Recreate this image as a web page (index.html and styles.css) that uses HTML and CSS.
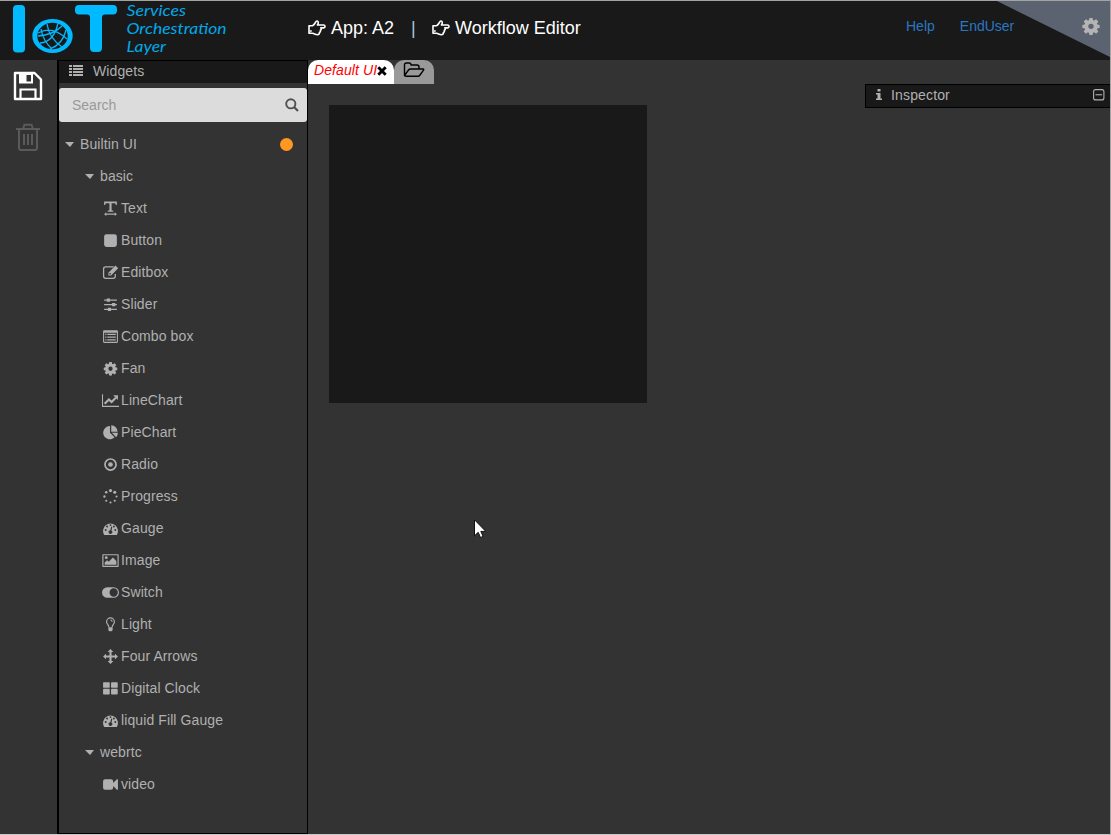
FILE: index.html
```html
<!DOCTYPE html>
<html lang="en">
<head>
<meta charset="utf-8">
<title>IoT Services Orchestration Layer</title>
<link rel="stylesheet" href="styles.css">
</head>
<body>
<svg class="defs" aria-hidden="true">
  <symbol id="gear" viewBox="0 0 16 16"><path fill-rule="evenodd" d="M6.600 .8h2.800l.4 2 1 .4 1.700-1.200 2 2-1.200 1.700.4 1 2 .4v2.600l-2 .4-.4 1 1.200 1.700-2 2-1.700-1.200-1 .4-.4 2H6.600l-.4-2-1-.4-1.700 1.200-2-2 1.200-1.700-.4-1-2-.4V7.100l2-.4.4-1L1.500 4l2-2 1.700 1.200 1-.4zM8 5.900a2.400 2.400 0 1 0 0 4.800 2.400 2.400 0 0 0 0-4.800z"/></symbol>
  <symbol id="hand" viewBox="0 0 18 16"><path fill="none" stroke="currentColor" stroke-width="1.600" stroke-linejoin="round" d="M1 5.700h3.500C6 5 6.600 3.700 7.600 2.200 8.200 .6 10.300 .7 10.300 2.500c0 1-.4 1.700-.9 2.500h6.100c2 0 2 2.900 0 2.900h-2.700c.8.700.5 2-.5 2.400.4.900 0 1.900-.9 2.200.2 1.500-.7 2.200-2 2.200-2 0-3-1-4.900-1.400H1z"/><circle cx="2.900" cy="11" r=".9"/></symbol>
  <symbol id="gauge" viewBox="0 0 16 16"><path fill-rule="evenodd" d="M2 14a7 7 0 1 1 12 0zM3.500 8.500a.9.900 0 1 0 0 1.800.9.900 0 0 0 0-1.800zM4.800 5.200a.9.900 0 1 0 0 1.800.9.900 0 0 0 0-1.800zM8 3.900a.9.900 0 1 0 0 1.800.9.900 0 0 0 0-1.800zM11.200 5.200a.9.900 0 1 0 0 1.800.9.900 0 0 0 0-1.800zM12.500 8.500a.9.900 0 1 0 0 1.800.9.900 0 0 0 0-1.800zM8.700 6.200l-.9 3.400a1.700 1.700 0 1 0 1.100.3l.8-3.400z"/></symbol>
</svg>
<div class="app">
  <header class="header">
    <svg class="logo" viewBox="0 0 240 59">
      <rect x="13" y="4" width="12" height="47.500" rx="4"/>
      <path d="M79 4h34a4 4 0 0 1 4 4v1.500a4 4 0 0 1-4 4h-8q-3 0-3 3V47a4 4 0 0 1-4 4h-4a4 4 0 0 1-4-4V16.500q0-3-3-3h-8a4 4 0 0 1-4-4V8a4 4 0 0 1 4-4z"/>
      <ellipse cx="52.500" cy="35" rx="20.200" ry="17"/>
      <ellipse class="globe" cx="52.500" cy="35" rx="15.200" ry="13.200"/>
      <g class="mesh">
        <path d="M38 32Q52 24 67 38M40 42Q54 41 58 22M47 23Q49 37 62 46M38 35Q53 34 62 25M41 28Q43 40 52 48M50 48Q63 43 66 29"/>
      </g>
      <g class="tagline">
        <text x="126.500" y="15" textLength="59.500" lengthAdjust="spacingAndGlyphs">Services</text>
        <text x="126.500" y="33" textLength="100" lengthAdjust="spacingAndGlyphs">Orchestration</text>
        <text x="126.500" y="51" textLength="39.500" lengthAdjust="spacingAndGlyphs">Layer</text>
      </g>
    </svg>
    <nav class="title">
      <svg class="hand"><use href="#hand"/></svg><span class="app-name">App: A2</span>
      <span class="sep">|</span>
      <svg class="hand"><use href="#hand"/></svg><span class="editor">Workflow Editor</span>
    </nav>
    <nav class="links"><a>Help</a><a>EndUser</a></nav>
    <div class="corner"><svg><use href="#gear"/></svg></div>
  </header>
  <main class="body">
    <aside class="tools">
      <svg class="save" viewBox="0 0 30 30"><path d="M2 2h19.500L28 8.500V28H2z" fill="none" stroke="currentColor" stroke-width="2.400" stroke-linejoin="round"/><path fill-rule="evenodd" d="M6 2h14v10.500H6zM13.500 4v6.500H18V4z"/><path d="M7.500 28v-9.500h15V28" fill="none" stroke="currentColor" stroke-width="2.200"/></svg>
      <svg class="trash" viewBox="0 0 26 28"><path d="M1 6h24M8 6l1.500-4.300h7L18 6M4 6v19q0 2 2 2h14q2 0 2-2V6M9 11v11M13 11v11M17 11v11" fill="none" stroke="currentColor" stroke-width="2"/></svg>
    </aside>
    <aside class="sidebar">
      <div class="panel-head"><svg viewBox="0 0 14 12"><path d="M0 0h3v2H0zM4 0h10v2H4zM0 3h3v2H0zM4 3h10v2H4zM0 6h3v2H0zM4 6h10v2H4zM0 9h3v2H0zM4 9h10v2H4z"/></svg>Widgets</div>
      <div class="search"><span>Search</span><svg viewBox="0 0 14 14"><path d="M9 9l4 4" stroke="currentColor" stroke-width="2.200"/><circle cx="5.800" cy="5.800" r="4.600" fill="none" stroke="currentColor" stroke-width="1.900"/></svg></div>
      <ul class="tree">
        <li class="root"><i class="caret"></i>Builtin UI<b class="dot"></b></li>
        <li class="group"><i class="caret"></i>basic</li>
        <li><svg viewBox="0 0 16 16"><path d="M2 1.500h12v3.300h-1L12.500 3H9v6.600l1.600.5v1H5.400v-1L7 9.600V3H3.500L3 4.800H2zM2 13.300l2-1.700v1.100h8v-1.100l2 1.700-2 1.700v-1.100H4V15z"/></svg>Text</li>
        <li><svg viewBox="0 0 16 16"><rect x="2" y="2" width="12" height="12" rx="2.300"/></svg>Button</li>
        <li><svg viewBox="0 0 16 16"><path d="M11 2.600H3.500Q1.500 2.600 1.500 4.600v7q0 2 2 2h7q2 0 2-2V9.500" fill="none" stroke="currentColor" stroke-width="1.200"/><path fill-rule="evenodd" d="M12.700 1.500l2.500 2.500L8.600 10.800H6V8.200zM7 8.800v1h1l.6-.6-1-1z"/></svg>Editbox</li>
        <li><svg viewBox="0 0 16 16"><path d="M2 3.200h12v1.200H2zM2 7.600h12v1.200H2zM2 12h12v1.200H2zM4.500 2.300h3v3h-3zM9.500 6.700h3v3h-3zM5.500 11.100h3v3h-3z"/></svg>Slider</li>
        <li><svg viewBox="0 0 16 16"><path fill-rule="evenodd" d="M2 2h12q1 0 1 1v10q0 1-1 1H2q-1 0-1-1V3q0-1 1-1zM2 4.500V13h12V4.500zM3 5.500h1.200v1.200H3zM5 5.500h8v1.200H5zM3 8h1.200v1.200H3zM5 8h8v1.200H5zM3 10.500h1.200v1.200H3zM5 10.500h8v1.200H5z"/></svg>Combo box</li>
        <li><svg viewBox="-1.500 -1.500 19 19"><use href="#gear" width="16" height="16"/></svg>Fan</li>
        <li><svg viewBox="0 0 16 16"><path d="M.5 2v11.500H16" fill="none" stroke="currentColor"/><path d="M2.500 11l4-4 2.500 2.500L13 5.500" fill="none" stroke="currentColor" stroke-width="2"/><path d="M10.500 3H15v4.500z"/></svg>LineChart</li>
        <li><svg viewBox="0 0 16 16"><path d="M7.500 2v6.200l4.300 4.300A6.200 6.200 0 1 1 7.500 2zM8.700 1.200A6.200 6.200 0 0 1 14.700 7.300h-6zM9.300 8.300h5.700a6 6 0 0 1-1.700 4.100z"/></svg>PieChart</li>
        <li><svg viewBox="0 0 16 16"><circle cx="8" cy="8" r="5.200" fill="none" stroke="currentColor" stroke-width="1.600"/><circle cx="8" cy="8" r="2.200"/></svg>Radio</li>
        <li><svg viewBox="0 0 16 16"><circle cx="8" cy="2.400" r="1.500"/><circle cx="12" cy="4" r="1.500"/><circle cx="13.700" cy="8" r="1"/><circle cx="12" cy="12" r="1"/><circle cx="8" cy="13.700" r="1"/><circle cx="4" cy="12" r="1"/><circle cx="2.300" cy="8" r="1.100"/><circle cx="4" cy="4" r="1.200"/></svg>Progress</li>
        <li><svg><use href="#gauge"/></svg>Gauge</li>
        <li><svg viewBox="0 0 16 16"><path fill-rule="evenodd" d="M1 2h14q.7 0 .7.700v10.600q0 .7-.7.700H1q-.7 0-.7-.7V2.700Q.3 2 1 2zM1.400 3.100v9.800h13.200V3.100z"/><circle cx="4" cy="5.300" r="1.400"/><path d="M2.500 12V9.800l2.300-2 1.500 1.400 4-4 3.200 3.200V12z"/></svg>Image</li>
        <li><svg viewBox="0 0 16 16"><path fill-rule="evenodd" d="M5 3h6a5 5 0 0 1 0 10H5A5 5 0 0 1 5 3zM11 4.100a3.900 3.900 0 1 0 0 7.800 3.900 3.900 0 0 0 0-7.800z"/></svg>Switch</li>
        <li><svg viewBox="0 0 16 16"><path d="M6.500 10.500C6.500 8.500 4.300 7.800 4.300 5.500a3.700 3.700 0 0 1 7.400 0c0 2.300-2.200 3-2.200 5M8 3.800q1.500 0 1.600 1.500" fill="none" stroke="currentColor" stroke-width="1.100"/><path d="M6 10.500h4v2.800l-1 1H7l-1-1z"/></svg>Light</li>
        <li><svg viewBox="0 0 16 16"><path d="M8 1l2.700 2.800H9v3.200h3.200V5.300L15 8l-2.800 2.700V9H9v3.200h1.700L8 15l-2.700-2.800H7V9H3.800v1.700L1 8l2.800-2.700V7H7V3.800H5.300z"/></svg>Four Arrows</li>
        <li><svg viewBox="0 0 16 16"><rect x="1" y="2" width="6.300" height="5.300" rx=".8"/><rect x="8.500" y="2" width="6.300" height="5.300" rx=".8"/><rect x="1" y="8.300" width="6.300" height="5.300" rx=".8"/><rect x="8.500" y="8.300" width="6.300" height="5.300" rx=".8"/></svg>Digital Clock</li>
        <li><svg><use href="#gauge"/></svg>liquid Fill Gauge</li>
        <li class="group"><i class="caret"></i>webrtc</li>
        <li><svg viewBox="0 0 16 16"><path d="M3 3h5.500q2 0 2 2v1.500L14 3h1v10h-1l-3.500-3.500V11q0 2-2 2H3q-2 0-2-2V5q0-2 2-2z"/></svg>video</li>
      </ul>
    </aside>
    <section class="workspace">
      <div class="tabs">
        <div class="tab active"><em>Default UI</em><svg viewBox="0 0 10 10"><path d="M1.300 1.300l7.400 7.400M8.700 1.300L1.300 8.700" stroke="currentColor" stroke-width="2.900"/></svg></div>
        <div class="tab open"><svg viewBox="0 0 22 16"><path d="M1.500 13V3q0-2 2-2H6q2 0 2 2h6q2 0 2 2v2M1.500 13.500L5.500 8q.8-1 2-1H20q1.200 0 .5 1.200L17 13q-.8 1.200-2 1.200H3q-1.500 0-1.500-1.200z" fill="none" stroke="currentColor" stroke-width="1.400" stroke-linejoin="round"/></svg></div>
      </div>
      <div class="stage"></div>
      <div class="inspector"><svg class="info" viewBox="0 0 6 12"><path d="M1.500 0h3v2.500h-3zM0 4h4.500v5.500H6V11H0V9.500h1.500v-4H0z"/></svg>Inspector<svg class="collapse" viewBox="0 0 12 12"><rect x=".6" y=".6" width="10.300" height="10.300" rx="2" fill="none" stroke="currentColor" stroke-width="1.100"/><path d="M2.500 5.200h6.600v1.100H2.500z"/></svg></div>
      <svg class="cursor" viewBox="0 0 12 20"><path d="M.5.8v16l3.700-3.500 2.300 5.200 2.600-1.100-2.300-5h5z"/></svg>
    </section>
  </main>
</div>
</body>
</html>
```

FILE: styles.css
```css
* { box-sizing: border-box; }
body { margin: 0; background: #333; color: #b0b0b0; font: 14px/20px "Liberation Sans", Arial, sans-serif; overflow: hidden; }
svg { display: block; fill: currentColor; flex: none; }
.defs { width: 0; height: 0; position: absolute; }
.app { width: 1111px; height: 835px; display: flex; flex-direction: column; border: solid #a3a3a3; border-width: 1px 1px 1px 0; border-bottom-color: #c8c8c8; }
.header { height: 59px; flex: none; display: flex; background: #191919; }
.logo { width: 240px; height: 59px; fill: #00b9ff; }
.logo .globe { fill: #191919; }
.mesh { fill: none; stroke: #00b9ff; stroke-width: 1.3; }
.tagline { font: italic 400 15.5px Lato, sans-serif; fill: #00a9e8; }
.title { width: 666px; padding: 17px 0 0 68px; display: flex; font-size: 18px; color: #fff; white-space: nowrap; }
.hand { width: 18px; height: 16px; margin-top: 2px; }
.app-name { width: 85px; padding-left: 5px; }
.sep { width: 21px; color: #a9c4e0; }
.editor { padding-left: 5px; }
.links { width: 91px; padding-top: 15px; display: flex; gap: 25px; color: #2a77c4; white-space: nowrap; }
.corner { width: 113px; height: 56px; background: #5b6270; clip-path: polygon(0 0, 100% 0, 100% 100%); padding: 16px 0 0 85px; color: #b4b4b4; }
.corner svg { width: 18px; height: 18px; }
.body { flex: 1; display: flex; min-height: 0; }
.tools { width: 57px; padding: 11px 0 0 13px; display: flex; flex-direction: column; gap: 22px; }
.save { width: 30px; height: 30px; color: #fff; }
.trash { width: 26px; height: 28px; margin-left: 2px; color: #5a5a5a; }
.sidebar { width: 251px; border: solid #000; border-width: 1px 1px 1px 2px; }
.panel-head { height: 22px; background: #191919; display: flex; align-items: center; gap: 10px; padding: 0 0 2px 10px; letter-spacing: .1px; }
.panel-head svg { width: 14px; height: 12px; }
.search { height: 34px; margin-top: 5px; border-radius: 3px; background: #dcdcdc; color: #999; display: flex; align-items: center; justify-content: space-between; padding: 0 8px 0 13px; }
.search svg { width: 14px; height: 14px; color: #505050; }
.tree { list-style: none; margin: 6px 0 0; padding: 0; letter-spacing: .1px; }
.tree li { height: 32px; display: flex; align-items: center; padding-left: 43px; gap: 2px; white-space: nowrap; }
.tree li svg { width: 17px; height: 17px; }
.tree .root { padding-left: 6px; gap: 6px; }
.tree .group { padding-left: 26px; gap: 6px; }
.caret { border: solid transparent; border-width: 5px 4.5px 0; border-top-color: currentColor; width: 9px; margin-right: 0; }
.tree .root .caret, .tree .group .caret { border-left-width: 5px; border-right-width: 4px; margin-right: 0; }
.tree .caret { width: 9px; }
.tree .root, .tree .group { gap: 6px; }
.dot { width: 13px; height: 13px; border-radius: 50%; background: #ff9721; margin: 0 14px 0 auto; }
.workspace { flex: 1; position: relative; }
.tabs { display: flex; height: 24px; }
.tab { border-radius: 10px 10px 0 0; display: flex; }
.active { width: 86px; background: #fff; color: #f00; padding-left: 6px; white-space: nowrap; letter-spacing: .1px; }
.active svg { width: 10px; height: 10px; margin-top: 6px; color: #000; }
.open { width: 40px; background: #999; color: #000; padding: 2px 0 0 9px; }
.open svg { width: 22px; height: 16px; }
.stage { width: 318px; height: 298px; margin: 21px 0 0 21px; background: #191919; }
.inspector { position: absolute; top: 24px; right: 0; width: 245px; height: 24px; background: #191919; border: 1px solid #000; border-right: 0; display: flex; align-items: center; padding: 0 5px 2px 10px; letter-spacing: .15px; }
.info { width: 6px; height: 12px; margin-right: 9px; }
.collapse { width: 12px; height: 12px; margin-left: auto; }
.cursor { position: absolute; left: 166px; top: 459px; width: 12px; height: 20px; fill: #fff; stroke: #111; stroke-width: 1; }
```
